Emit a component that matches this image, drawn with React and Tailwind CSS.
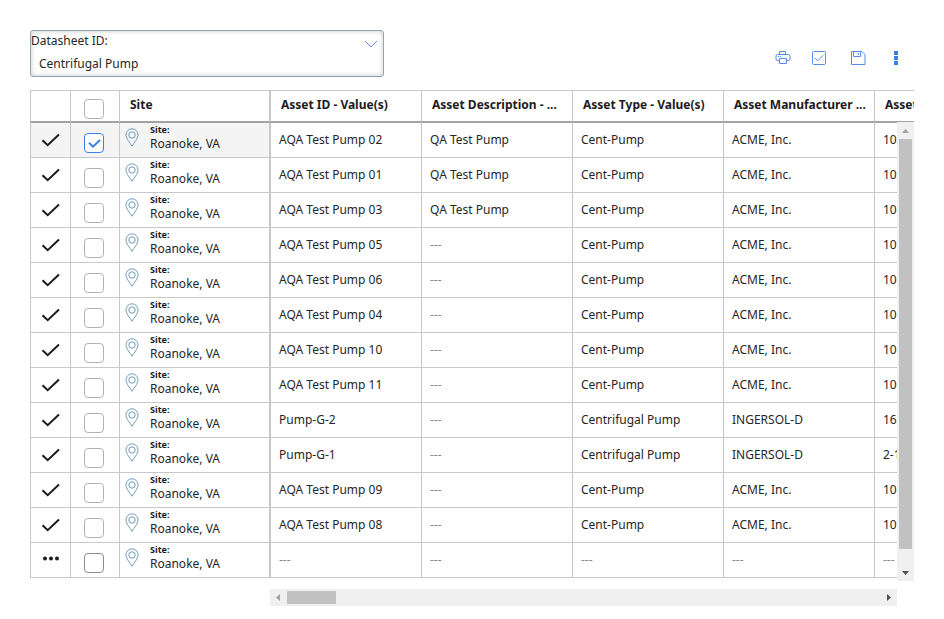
import React from "react";

const rows = [
  ["AQA Test Pump 02", "QA Test Pump", "Cent-Pump", "ACME, Inc.", "10"],
  ["AQA Test Pump 01", "QA Test Pump", "Cent-Pump", "ACME, Inc.", "10"],
  ["AQA Test Pump 03", "QA Test Pump", "Cent-Pump", "ACME, Inc.", "10"],
  ["AQA Test Pump 05", "---", "Cent-Pump", "ACME, Inc.", "10"],
  ["AQA Test Pump 06", "---", "Cent-Pump", "ACME, Inc.", "10"],
  ["AQA Test Pump 04", "---", "Cent-Pump", "ACME, Inc.", "10"],
  ["AQA Test Pump 10", "---", "Cent-Pump", "ACME, Inc.", "10"],
  ["AQA Test Pump 11", "---", "Cent-Pump", "ACME, Inc.", "10"],
  ["Pump-G-2", "---", "Centrifugal Pump", "INGERSOL-D", "16"],
  ["Pump-G-1", "---", "Centrifugal Pump", "INGERSOL-D", "2-1"],
  ["AQA Test Pump 09", "---", "Cent-Pump", "ACME, Inc.", "10"],
  ["AQA Test Pump 08", "---", "Cent-Pump", "ACME, Inc.", "10"],
  ["---", "---", "---", "---", "---"],
];

const headers = [
  "Asset ID - Value(s)",
  "Asset Description - ...",
  "Asset Type - Value(s)",
  "Asset Manufacturer ...",
];

function CheckBox({ label, checked = false, strong = false }) {
  return (
    <span className="relative block size-5">
      <input
        type="checkbox"
        aria-label={label}
        defaultChecked={checked}
        className={
          "peer block size-5 appearance-none rounded-[4px] border bg-white checked:border-[#3b82e6] " +
          (strong ? "border-[#8c8c8c]" : "border-[#b3b3b3]")
        }
      />
      <svg
        viewBox="0 0 20 20"
        className="pointer-events-none absolute inset-0 hidden size-5 peer-checked:block"
        fill="none"
        stroke="#3b82e6"
        strokeWidth="2"
      >
        <path d="M5 9.700l4 4L16 7" />
      </svg>
    </span>
  );
}

function PinIcon() {
  return (
    <svg viewBox="0 0 14 19" className="mt-[5px] h-[19px] w-[14px] shrink-0" fill="none" stroke="#6f9bb8">
      <path d="M7 18.200C5 14.600 1 11 1 6.800a6 6 0 0 1 12 0C13 11 9 14.600 7 18.200z" />
      <circle cx="7" cy="7" r="3.200" />
    </svg>
  );
}

function StatusIcon({ done }) {
  if (done) {
    return (
      <svg viewBox="0 0 20 14" className="mt-[10px] ml-[10px] h-[14px] w-5" fill="none" stroke="#1c1c1c" strokeWidth="2">
        <path d="M1.500 7.200l5.200 5L18 1.500" />
      </svg>
    );
  }
  return (
    <svg viewBox="0 0 20 14" className="mt-[9px] ml-[10px] h-[14px] w-5" fill="#1c1c1c">
      <circle cx="4" cy="6.500" r="2" />
      <circle cx="10" cy="6.500" r="2" />
      <circle cx="16" cy="6.500" r="2" />
    </svg>
  );
}

function Toolbar() {
  return (
    <div className="mt-5 mr-[15px] flex items-start">
      <button type="button" aria-label="Print" className="mr-5">
        <svg viewBox="0 0 16 16" className="block size-4" fill="none" stroke="#5b8be8">
          <path d="M4.500 4.500v-3h6v3M4.500 10.500h-2a1.500 1.500 0 0 1-1.500-1.500V6a1.500 1.500 0 0 1 1.500-1.500h11A1.500 1.500 0 0 1 15 6v3a1.500 1.500 0 0 1-1.500 1.500h-2M4.500 8.500h7v5h-7z" />
          <path d="M3 6.500h1M5 6.500h1" />
        </svg>
      </button>
      <button type="button" aria-label="Approve" className="mr-[23px]">
        <svg viewBox="0 0 16 16" className="block size-4" fill="none" stroke="#5b8be8">
          <rect x="1.500" y="1.500" width="13" height="13" rx="1" />
          <path d="M4 8l2.700 2.700L12.500 5" />
        </svg>
      </button>
      <button type="button" aria-label="Save" className="mr-7">
        <svg viewBox="0 0 16 16" className="block size-4" fill="none" stroke="#5b8be8">
          <path d="M1.500 1.500h10.500l3 3v10H1.500zM3.500 1.500v5h7v-5M8.500 3v2" />
        </svg>
      </button>
      <button type="button" aria-label="More options">
        <svg viewBox="0 0 5 16" className="block h-4 w-[5px]" fill="#3b7fe0">
          <path d="M0 1h4v4H0zM0 6h4v4H0zM0 11h4v4H0z" />
        </svg>
      </button>
    </div>
  );
}

export default function App() {
  return (
    <main className="bg-white px-[30px] pt-[30px] pb-3 font-['Noto_Sans',sans-serif] text-[12px] leading-4 text-[#262626]">
      <div className="flex items-start justify-between">
        <div className="relative h-[47px] w-[354px] rounded-[3px] border border-[#8fa5b2] shadow-[inset_0_0_5px_#c8c8c8]">
          <label htmlFor="datasheet" className="block pt-[2px]">
            Datasheet ID:
          </label>
          <select id="datasheet" className="block h-[26px] w-full appearance-none bg-transparent pt-1 pl-2">
            <option>Centrifugal Pump</option>
          </select>
          <svg
            viewBox="0 0 14 8"
            className="pointer-events-none absolute top-[9px] right-[5px] h-2 w-[14px]"
            fill="none"
            stroke="#6c8cf0"
          >
            <path d="M1 1l6 6 6-6" />
          </svg>
        </div>
        <Toolbar />
      </div>

      <div className="relative mt-[13px]">
        <div className="overflow-hidden">
          <table className="w-full table-fixed border-separate border-spacing-0 text-left whitespace-nowrap">
            <colgroup>
              <col className="w-[40px]" />
              <col className="w-[49px]" />
              <col className="w-[150px]" />
              <col className="w-[152px]" />
              <col className="w-[151px]" />
              <col className="w-[151px]" />
              <col className="w-[151px]" />
              <col />
            </colgroup>
            <thead>
              <tr className="h-[33px] align-top font-bold text-[#1c1c1c] *:border-t *:border-b-2 *:border-l *:border-[#c8c8c8] *:border-b-[#a3a3a3]">
                <th aria-label="Status" />
                <th className="pt-2 pl-[13px]">
                  <CheckBox label="Select all" />
                </th>
                <th className="pt-[6px] pl-[10px]">Site</th>
                {headers.map((h, i) => (
                  <th key={h} className={"pt-[6px] pl-[10px] " + (i === 0 ? "border-l-2!" : "")}>
                    {h}
                  </th>
                ))}
                <th className="overflow-hidden pt-[6px] pl-[10px]">Asset</th>
              </tr>
            </thead>
            <tbody>
              {rows.map((row, i) => (
                <tr key={i} className="h-[35px] align-top *:border-b *:border-l *:border-[#c8c8c8]">
                  <td className={i === 0 ? "bg-[#f4f4f4]" : ""}>
                    <StatusIcon done={i < 12} />
                  </td>
                  <td className={"pt-[10px] pl-[13px] " + (i === 0 ? "bg-[#f4f4f4]" : "")}>
                    <CheckBox label={"Select row " + (i + 1)} checked={i === 0} strong={i === 12} />
                  </td>
                  <td className={"pl-[5px] " + (i === 0 ? "bg-[#f4f4f4]" : "")}>
                    <div className="flex h-[34px] gap-[11px]">
                      <PinIcon />
                      <div className="pt-px">
                        <div className="h-3 text-[9px] leading-3 font-bold text-[#1c1c1c]">Site:</div>
                        <div>Roanoke, VA</div>
                      </div>
                    </div>
                  </td>
                  {row.map((v, j) => (
                    <td
                      key={j}
                      className={
                        "overflow-hidden pt-[9px] pl-2 " +
                        (j === 0 ? "border-l-2! " : "") +
                        (v === "---" ? "text-[#8a8a8a]" : "")
                      }
                    >
                      {v}
                    </td>
                  ))}
                </tr>
              ))}
            </tbody>
          </table>
        </div>
        <div className="absolute top-8 right-0 -bottom-[3px] flex w-[17px] flex-col items-center bg-[#f0f0f0]">
          <svg viewBox="0 0 17 17" className="size-[17px] shrink-0" fill="#a3a3a3">
            <path d="M5 11h7L8.500 7z" />
          </svg>
          <div className="mb-[15px] w-[13px] grow bg-[#c1c1c1]" />
          <svg viewBox="0 0 17 17" className="size-[17px] shrink-0" fill="#505050">
            <path d="M5 7h7l-3.500 4z" />
          </svg>
        </div>
      </div>

      <div className="mt-[11px] mr-[17px] ml-[240px] flex h-[17px] items-center bg-[#f0f0f0]">
        <svg viewBox="0 0 17 17" className="size-[17px] shrink-0" fill="#a3a3a3">
          <path d="M10 5v7L6 8.500z" />
        </svg>
        <div className="h-[13px] w-[49px] bg-[#c1c1c1]" />
        <svg viewBox="0 0 17 17" className="ml-auto size-[17px] shrink-0" fill="#505050">
          <path d="M7 5v7l4-3.500z" />
        </svg>
      </div>
    </main>
  );
}
